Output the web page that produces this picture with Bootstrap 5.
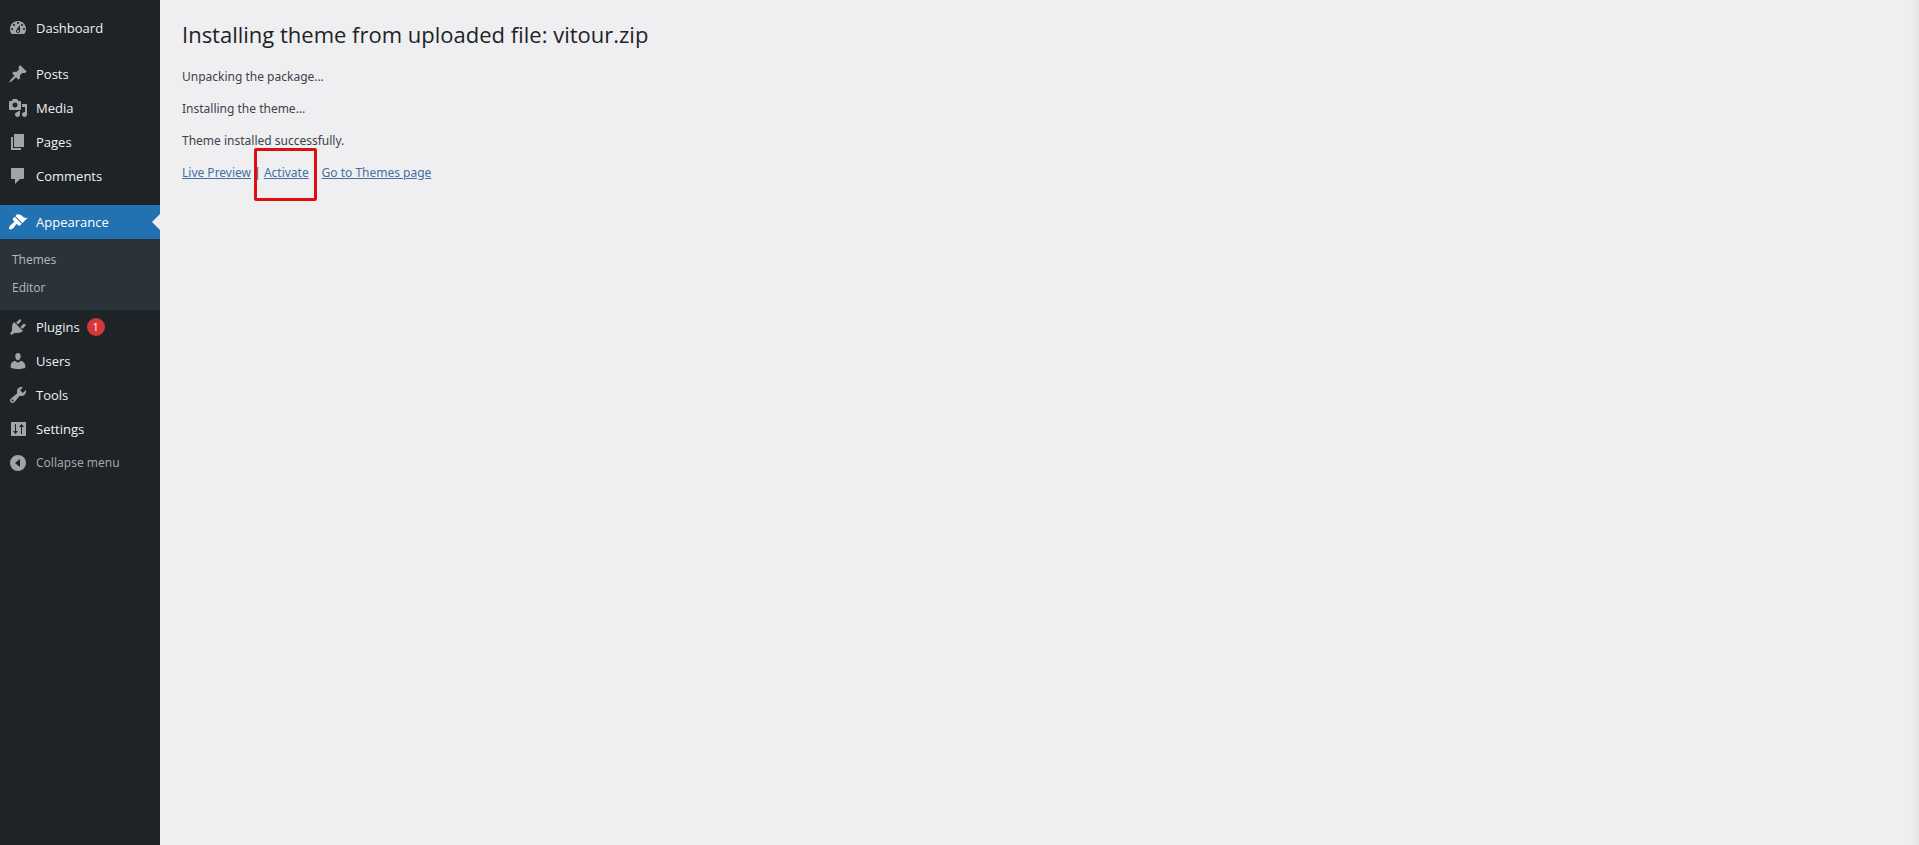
<!DOCTYPE html>
<html lang="en">
<head>
<meta charset="utf-8">
<meta name="viewport" content="width=device-width, initial-scale=1">
<title>Installing theme</title>
<link href="https://cdn.jsdelivr.net/npm/bootstrap@5.3.0/dist/css/bootstrap.min.css" rel="stylesheet">
<style>
body{background:#efeff1;color:#3c434a;font-family:"Noto Sans","Open Sans",sans-serif;font-size:12px;line-height:20px}
.side-menu{width:160px;background:#1d2327;padding-top:11px}
.side-menu .nav-link{height:34px;padding:0 8px;gap:8px;color:#f0f0f1;font-family:"Open Sans","Noto Sans",sans-serif;font-size:13px;line-height:18px;position:relative}
.side-menu svg{width:20px;height:20px;fill:#a0a5aa;flex:none}
.menu-gap{margin-top:12px}
.side-menu .current{background:#2271b1;color:#fff}
.side-menu .current svg{fill:#fff}
.side-menu .current::after{content:"";position:absolute;right:0;top:9px;border:8px solid transparent;border-left:0;border-right-color:#efeff1}
.sub-menu{background:#2c3338;padding:7px 0 8px}
.side-menu .sub-menu .nav-link{height:28px;padding:0 12px;color:#b7bbbf;font-size:12px}
.side-menu .collapse-btn{color:#a2a6aa;font-family:"Noto Sans","Open Sans",sans-serif;font-size:12px}
.count{width:18px;height:18px;background:#d63638;font-size:11px;line-height:18px;margin-left:-1px}
.main-area{padding:20px 22px;background:linear-gradient(to left,#e3e3e5,#efeff1 9px)}
h1{font-family:"Open Sans","Noto Sans",sans-serif;font-size:22px;line-height:28px;color:#1d2327;font-weight:400;margin-bottom:19px}
.main-area p{margin-bottom:12px}
.main-area a{color:#44709f}
.marked{position:relative}
.marked::after{content:"";position:absolute;left:-10px;right:-8px;top:-16px;bottom:-20px;border:3px solid #dc0f12;border-radius:2px;pointer-events:none}
</style>
</head>
<body>
<div class="d-flex min-vh-100">
<nav class="side-menu flex-shrink-0" aria-label="Main menu">
<ul class="nav flex-column">
<li><a class="nav-link d-flex align-items-center" href="#"><svg viewBox="0 0 20 20"><path d="M3.76 16h12.48c1.1-1.37 1.76-3.11 1.76-5 0-4.42-3.58-8-8-8s-8 3.58-8 8c0 1.89.66 3.63 1.76 5zM10 4c.55 0 1 .45 1 1s-.45 1-1 1-1-.45-1-1 .45-1 1-1zM6 6c.55 0 1 .45 1 1s-.45 1-1 1-1-.45-1-1 .45-1 1-1zm8 0c.55 0 1 .45 1 1s-.45 1-1 1-1-.45-1-1 .45-1 1-1zm-5.37 5.55L12 7v6c0 1.1-.9 2-2 2s-2-.9-2-2c0-.57.24-1.08.63-1.45zM4 10c.55 0 1 .45 1 1s-.45 1-1 1-1-.45-1-1 .45-1 1-1zm12 0c.55 0 1 .45 1 1s-.45 1-1 1-1-.45-1-1 .45-1 1-1zm-5 3c0-.55-.45-1-1-1s-1 .45-1 1 .45 1 1 1 1-.45 1-1z"/></svg>Dashboard</a></li>
<li class="menu-gap"><a class="nav-link d-flex align-items-center" href="#"><svg viewBox="0 0 20 20"><path d="M10.44 3.02l1.82-1.82 6.36 6.35-1.83 1.82c-1.05-.68-2.48-.57-3.41.36l-.75.75c-.92.93-1.04 2.35-.35 3.41l-1.83 1.82-2.41-2.41-2.8 2.79c-.42.42-3.38 2.71-3.8 2.29s1.86-3.39 2.28-3.81l2.79-2.79L4.1 9.36l1.83-1.82c1.05.69 2.48.57 3.4-.36l.75-.75c.93-.92 1.05-2.35.36-3.41z"/></svg>Posts</a></li>
<li><a class="nav-link d-flex align-items-center" href="#"><svg viewBox="0 0 20 20"><path d="M13 11V4c0-.55-.45-1-1-1h-1.67L9 1H5L3.67 3H2c-.55 0-1 .45-1 1v7c0 .55.45 1 1 1h10c.55 0 1-.45 1-1zM7 4.5c1.38 0 2.5 1.12 2.5 2.5S8.38 9.5 7 9.5 4.5 8.38 4.5 7 5.62 4.5 7 4.5zM14 6h5v10.5c0 1.38-1.12 2.5-2.5 2.5S14 17.88 14 16.5s1.12-2.5 2.5-2.5c.17 0 .34.02.5.05V9h-3V6zm-4 8.05V13h2v3.5c0 1.38-1.12 2.5-2.5 2.5S7 17.88 7 16.5 8.12 14 9.5 14c.17 0 .34.02.5.05z"/></svg>Media</a></li>
<li><a class="nav-link d-flex align-items-center" href="#"><svg viewBox="0 0 20 20"><path d="M6 15V2h10v13H6zm-1 1h8v2H3V5h2v11z"/></svg>Pages</a></li>
<li><a class="nav-link d-flex align-items-center" href="#"><svg viewBox="0 0 20 20"><path d="M4 2h11c.6 0 1 .4 1 1v9c0 .6-.4 1-1 1h-3l-5 5v-5H4c-.6 0-1-.4-1-1V3c0-.6.4-1 1-1z"/></svg>Comments</a></li>
<li class="menu-gap"><a class="nav-link current d-flex align-items-center" href="#" aria-current="page"><svg viewBox="0 0 20 20"><path d="M14.48 11.06L7.41 3.99l1.5-1.5c.5-.56 2.3-.47 3.51.32 1.21.8 1.43 1.28 2.91 2.1 1.18.64 2.45 1.26 4.45.85zm-.71.71L6.7 4.7 4.93 6.47c-.39.39-.39 1.02 0 1.41l1.06 1.06c.39.39.39 1.03 0 1.42-.6.6-1.43 1.11-2.21 1.69-.35.26-.7.53-1.01.84C1.43 14.23.4 16.08 1.4 17.07c.99 1 2.84-.03 4.18-1.36.31-.31.58-.66.85-1.02.57-.78 1.08-1.61 1.69-2.21.39-.39 1.02-.39 1.41 0l1.06 1.06c.39.39 1.02.39 1.41 0z"/></svg>Appearance</a>
<ul class="sub-menu list-unstyled">
<li><a class="nav-link d-flex align-items-center" href="#">Themes</a></li>
<li><a class="nav-link d-flex align-items-center" href="#">Editor</a></li>
</ul></li>
<li><a class="nav-link d-flex align-items-center" href="#"><svg viewBox="0 0 20 20"><path d="M13.11 4.36L9.87 7.6 8 5.73l3.24-3.24c.35-.34 1.05-.2 1.56.32.52.51.66 1.21.31 1.55zm-8 1.77l.91-1.12 9.01 9.01-1.19.84c-.71.71-2.63 1.16-3.82 1.16H6.14L4.9 17.26c-.59.59-1.54.59-2.12 0-.59-.58-.59-1.53 0-2.12l1.24-1.24v-3.88c0-1.13.4-3.19 1.09-3.89zm7.26 3.97l3.24-3.24c.34-.35 1.04-.21 1.55.31.52.51.66 1.21.31 1.55l-3.24 3.25z"/></svg>Plugins <span class="count rounded-circle text-white text-center">1</span></a></li>
<li><a class="nav-link d-flex align-items-center" href="#"><svg viewBox="0 0 20 20"><path d="M10 9.25c-2.27 0-2.73-3.44-2.73-3.44C7 4.02 7.82 2 9.97 2c2.16 0 2.98 2.02 2.71 3.81 0 0-.41 3.44-2.68 3.44zm0 2.57L12.72 10c2.39 0 4.52 2.33 4.52 4.53v2.49s-3.65 1.13-7.24 1.13c-3.65 0-7.24-1.13-7.24-1.13v-2.49c0-2.25 1.94-4.48 4.47-4.48z"/></svg>Users</a></li>
<li><a class="nav-link d-flex align-items-center" href="#"><svg viewBox="0 0 20 20"><path d="M16.68 9.77c-1.34 1.34-3.3 1.67-4.95.99l-5.41 6.52c-.99.99-2.59.99-3.58 0s-.99-2.59 0-3.57l6.52-5.42c-.68-1.65-.35-3.61.99-4.95 1.28-1.28 3.12-1.62 4.72-1.06l-2.89 2.89 2.82 2.82 2.86-2.87c.53 1.58.18 3.39-1.08 4.65zM3.81 16.21c.4.39 1.04.39 1.43 0 .4-.4.4-1.04 0-1.43-.39-.4-1.03-.4-1.43 0-.39.39-.39 1.03 0 1.43z"/></svg>Tools</a></li>
<li><a class="nav-link d-flex align-items-center" href="#"><svg viewBox="0 0 20 20"><path fill-rule="evenodd" d="M18 17V3H3v14zM7 5h1v7h2l-2.500 3L5 12h2zM13.500 5l2.500 3h-2v7h-1V8h-2z"/></svg>Settings</a></li>
<li><button type="button" class="nav-link collapse-btn d-flex align-items-center w-100 border-0 bg-transparent"><svg viewBox="0 0 20 20"><path fill-rule="evenodd" d="M10 2a8 8 0 1 1 0 16a8 8 0 1 1 0-16zM12 6v8l-5-4z"/></svg>Collapse menu</button></li>
</ul>
</nav>
<main class="main-area flex-grow-1">
<h1>Installing theme from uploaded file: vitour.zip</h1>
<p>Unpacking the package…</p>
<p>Installing the theme…</p>
<p>Theme installed successfully.</p>
<p><a href="#">Live Preview</a> | <a class="marked" href="#">Activate</a> | <a href="#">Go to Themes page</a></p>
</main>
</div>
<script src="https://cdn.jsdelivr.net/npm/bootstrap@5.3.0/dist/js/bootstrap.bundle.min.js"></script>
</body>
</html>
